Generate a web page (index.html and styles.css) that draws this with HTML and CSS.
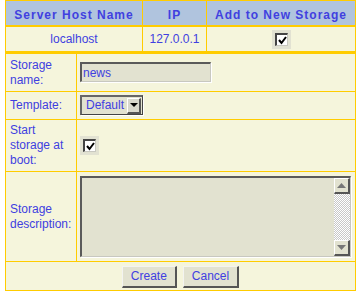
FILE: index.html
```html
<!DOCTYPE html>
<html lang="en">
  <head>
    <meta charset="UTF-8" />
    <title>New Storage</title>
    <link rel="stylesheet" href="styles.css">
  </head>
  <body>
    <div class="panel">
      <!-- Host list -->
      <div class="hosts">
        <div class="head">Server Host Name</div>
        <div class="head">IP</div>
        <div class="head">Add to New Storage</div>
        <div class="cell">localhost</div>
        <div class="cell">127.0.0.1</div>
        <div class="cell">
          <span class="check">
            <span class="box">
              <svg width="9" height="9" viewBox="0 0 9 9"><path d="M1 4 L3.5 7 L8 1" fill="none" stroke="#000" stroke-width="2"/></svg>
            </span>
          </span>
        </div>
      </div>

      <!-- Storage form -->
      <div class="form">
        <div class="label">Storage name:</div>
        <div class="value"><input class="field" type="text" value="news"></div>

        <div class="label">Template:</div>
        <div class="value">
          <span class="select">
            <span class="select-text">Default</span>
            <span class="drop">
              <svg width="8" height="5" viewBox="0 0 8 5"><path d="M0 0 H8 L4 4 Z" fill="#000"/></svg>
            </span>
          </span>
        </div>

        <div class="label">Start storage at boot:</div>
        <div class="value">
          <span class="check">
            <span class="box">
              <svg width="9" height="9" viewBox="0 0 9 9"><path d="M1 4 L3.5 7 L8 1" fill="none" stroke="#000" stroke-width="2"/></svg>
            </span>
          </span>
        </div>

        <div class="label">Storage description:</div>
        <div class="value">
          <div class="area">
            <div class="scroll">
              <span class="arrow">
                <svg width="9" height="5" viewBox="0 0 9 5"><path d="M4.5 0 L9 5 H0 Z" fill="#777"/></svg>
              </span>
              <span class="track"></span>
              <span class="arrow">
                <svg width="9" height="5" viewBox="0 0 9 5"><path d="M0 0 H9 L4.5 5 Z" fill="#777"/></svg>
              </span>
            </div>
          </div>
        </div>

        <div class="actions">
          <button class="btn">Create</button>
          <button class="btn">Cancel</button>
        </div>
      </div>
    </div>
  </body>
</html>
```
FILE: styles.css
```css
body {
  margin: 0;
  background: #fff;
  font-family: "Liberation Sans", Arial, sans-serif;
  font-size: 12px;
  line-height: 15px;
  color: #4040e0;
}
.panel {
  margin-left: 5px;
  width: 351px;
  padding: 1px;
  box-sizing: border-box;
  background: #ffcc00;
}
.hosts {
  display: grid;
  grid-template-columns: 136px 63px 148px;
  grid-template-rows: 24px 24px;
  column-gap: 1px;
  row-gap: 2px;
  margin-bottom: 3px;
}
.head {
  display: flex;
  align-items: center;
  justify-content: center;
  padding-top: 5px;
  box-sizing: border-box;
  background: #b0c4de;
  font-weight: bold;
  letter-spacing: 1px;
}
.cell {
  display: flex;
  align-items: center;
  justify-content: center;
  background: #f5f5dc;
}
.form {
  display: grid;
  grid-template-columns: 70px 278px;
  grid-template-rows: 37px 27px 51px 89px 28px;
  gap: 1px;
}
.label {
  display: flex;
  align-items: center;
  padding: 0 4px;
  background: #f5f5dc;
}
.value {
  display: flex;
  align-items: center;
  padding-left: 3px;
  background: #f5f5dc;
}
.check {
  display: flex;
  align-items: center;
  justify-content: center;
  width: 19px;
  height: 19px;
  background: #e2e2d2;
}
.box {
  display: flex;
  align-items: center;
  justify-content: center;
  width: 13px;
  height: 13px;
  box-sizing: border-box;
  padding: 1px 0 0 1px;
  background: #fff;
  border-top: 2px solid #444;
  border-left: 2px solid #444;
  border-right: 1px solid #c8c8c0;
  border-bottom: 1px solid #c8c8c0;
}
.field {
  width: 131px;
  height: 20px;
  box-sizing: border-box;
  margin: 0 0 1px 0;
  padding: 0 0 0 1px;
  border-top: 2px solid #5a5a5a;
  border-left: 2px solid #5a5a5a;
  border-right: 1px solid #c8c8c0;
  border-bottom: 1px solid #c8c8c0;
  box-shadow: 1px 1px 0 #fff;
  background: #e2e2d0;
  font: inherit;
  color: inherit;
  outline: none;
}
.select {
  display: flex;
  align-items: center;
  width: 63px;
  height: 20px;
  box-sizing: border-box;
  margin-bottom: 1px;
  padding-left: 4px;
  border-top: 2px solid #666;
  border-left: 2px solid #666;
  border-right: 1px solid #444;
  border-bottom: 1px solid #444;
  box-shadow: 1px 1px 0 #fff;
  background: #e2e2d0;
}
.select-text {
  flex: 1;
}
.drop {
  display: flex;
  align-items: center;
  justify-content: center;
  width: 14px;
  height: 16px;
  margin-right: 1px;
  box-sizing: border-box;
  background: #d8d8cc;
  border-top: 1px solid #fff;
  border-left: 1px solid #fff;
  border-right: 2px solid #555;
  border-bottom: 2px solid #555;
}
.area {
  display: flex;
  justify-content: flex-end;
  width: 271px;
  height: 81px;
  box-sizing: border-box;
  margin-bottom: 1px;
  border-top: 2px solid #5a5a5a;
  border-left: 2px solid #5a5a5a;
  border-right: 1px solid #c8c8c0;
  border-bottom: 1px solid #c8c8c0;
  box-shadow: 1px 1px 0 #fff;
  background: #e2e2d0;
}
.scroll {
  display: flex;
  flex-direction: column;
  width: 16px;
}
.arrow {
  display: flex;
  align-items: center;
  justify-content: center;
  height: 16px;
  box-sizing: border-box;
  background: #e2e2d0;
  border-top: 1px solid #fff;
  border-left: 1px solid #fff;
  border-right: 2px solid #555;
  border-bottom: 2px solid #555;
}
.track {
  flex: 1;
  background: repeating-conic-gradient(#c8c8c8 0 25%, #fff 0 50%) 0 0 / 2px 2px;
}
.actions {
  grid-column: 1 / -1;
  display: flex;
  justify-content: center;
  align-items: flex-start;
  gap: 6px;
  padding-top: 4px;
  box-sizing: border-box;
  background: #f5f5dc;
}
.btn {
  height: 22px;
  padding: 0 8px;
  background: #e2e2d0;
  border-top: 1px solid #f4f4f0;
  border-left: 1px solid #f4f4f0;
  border-right: 2px solid #555;
  border-bottom: 2px solid #555;
  font: inherit;
  color: inherit;
}
```
